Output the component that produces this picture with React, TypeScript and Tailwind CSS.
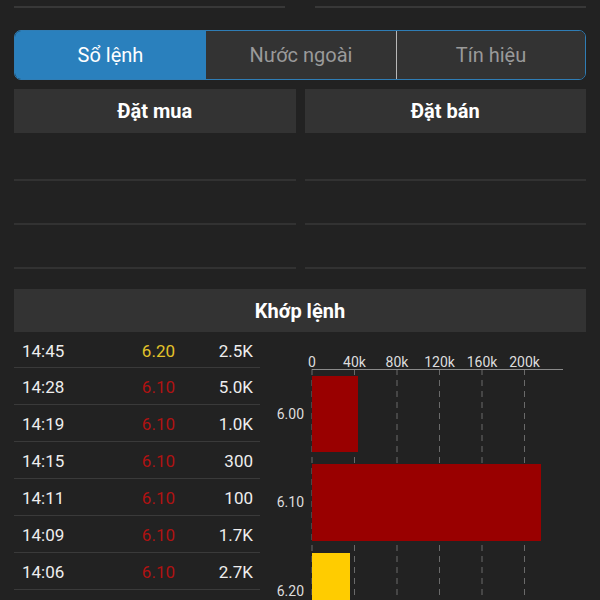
import React from "react";

type Trade = { time: string; price: string; vol: string; up?: boolean };

const trades: Trade[] = [
  { time: "14:45", price: "6.20", vol: "2.5K", up: true },
  { time: "14:28", price: "6.10", vol: "5.0K" },
  { time: "14:19", price: "6.10", vol: "1.0K" },
  { time: "14:15", price: "6.10", vol: "300" },
  { time: "14:11", price: "6.10", vol: "100" },
  { time: "14:09", price: "6.10", vol: "1.7K" },
  { time: "14:06", price: "6.10", vol: "2.7K" },
];

const ticks = [
  { x: 52, label: "0" },
  { x: 94.5, label: "40k" },
  { x: 137, label: "80k" },
  { x: 179.5, label: "120k" },
  { x: 222, label: "160k" },
  { x: 264.5, label: "200k" },
];

const bars = [
  { label: "6.00", y: 44, h: 76, w: 46, color: "#990000" },
  { label: "6.10", y: 132, h: 77, w: 229, color: "#990000" },
  { label: "6.20", y: 221, h: 80, w: 38, color: "#ffcc00" },
];

const VolumeChart = () => (
  <svg width="340" height="268" className="block shrink-0" style={{ fontFamily: "Roboto, sans-serif" }}>
    {/* grid */}
    {ticks.map((t) => (
      <line key={t.x} x1={t.x} y1={37} x2={t.x} y2={268} stroke="#6a6a6a" strokeWidth="1" strokeDasharray="6 5" />
    ))}
    <line x1={52} y1={37.5} x2={303} y2={37.5} stroke="#8a8a8a" strokeWidth="1" />
    {ticks.map((t) => (
      <text key={t.label} x={t.x} y={35} fill="#dddddd" fontSize="14" textAnchor="middle">
        {t.label}
      </text>
    ))}
    {/* bars */}
    {bars.map((b) => (
      <g key={b.label}>
        <rect x={52} y={b.y} width={b.w} height={b.h} fill={b.color} />
        <text x={44} y={b.y + 43} fill="#dddddd" fontSize="14" textAnchor="end">
          {b.label}
        </text>
      </g>
    ))}
  </svg>
);

export default function App() {
  return (
    <div
      className="w-[600px] h-[600px] overflow-hidden bg-[#222222] px-[14px] text-white"
      style={{ fontFamily: "Roboto, 'Noto Sans', sans-serif" }}
    >
      {/* top lines */}
      <div className="flex justify-between pt-[6px]">
        <div className="h-[2px] w-[271px] bg-[#383838]" />
        <div className="h-[2px] w-[271px] bg-[#383838]" />
      </div>

      {/* tabs */}
      <div className="mt-[22px] grid h-[50px] grid-cols-[191px_190px_1fr] overflow-hidden rounded-[7px] border border-[#2f7db5]">
        <div className="flex items-center justify-center bg-[#2a80bd] text-[20px] text-white">Sổ lệnh</div>
        <div className="flex items-center justify-center bg-[#333333] text-[20px] text-[#9a9a9a]">Nước ngoài</div>
        <div className="flex items-center justify-center border-l border-[#b8b8b8] bg-[#333333] text-[20px] text-[#9a9a9a]">
          Tín hiệu
        </div>
      </div>

      {/* order book */}
      <div className="mt-[9px] grid grid-cols-2 gap-x-[9px]">
        {["Đặt mua", "Đặt bán"].map((title) => (
          <div key={title}>
            <div className="flex h-[44px] items-center justify-center bg-[#333333] text-[20px] font-bold">{title}</div>
            <div className="h-[48px] border-b-2 border-[#323232]" />
            <div className="h-[44px] border-b-2 border-[#323232]" />
            <div className="h-[44px] border-b-2 border-[#323232]" />
          </div>
        ))}
      </div>

      {/* matched orders */}
      <div className="mt-[20px] flex h-[43px] items-center justify-center bg-[#333333] text-[20px] font-bold">Khớp lệnh</div>

      <div className="flex">
        <div className="w-[246px] shrink-0">
          {trades.map((t, i) => (
            <div
              key={i}
              className={`grid ${i === 0 ? "h-[36px]" : "h-[37px]"} grid-cols-[1fr_60px_78px] items-center border-b border-[#3a3a3a] pl-[8px] pr-[7px] pt-[4px] text-[17px] text-[#eeeeee]`}
            >
              <span>{t.time}</span>
              <span className={`text-right ${t.up ? "text-[#e3c22a]" : "text-[#b01212]"}`}>{t.price}</span>
              <span className="text-right">{t.vol}</span>
            </div>
          ))}
        </div>
        <VolumeChart />
      </div>
    </div>
  );
}
